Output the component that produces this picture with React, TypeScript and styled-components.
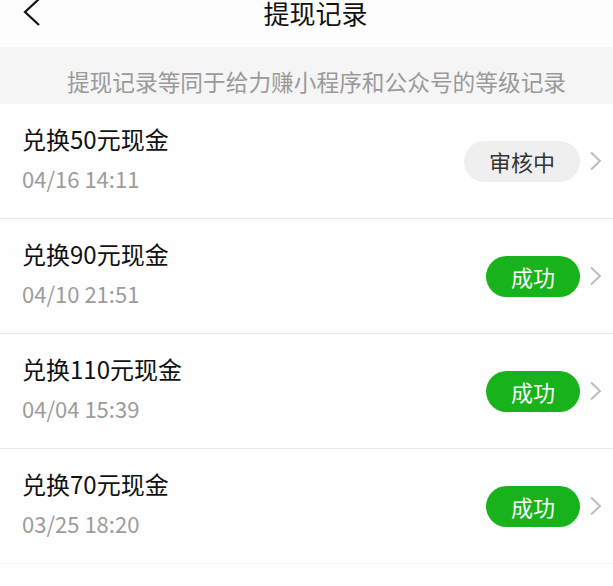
import React from "react";
import styled, { createGlobalStyle } from "styled-components";

const GlobalStyle = createGlobalStyle`
  html, body {
    margin: 0;
    padding: 0;
    background: #fefefe;
  }
  body {
    font-family: "Noto Sans CJK SC", "Noto Sans", sans-serif;
  }
`;

const Page = styled.div`
  width: 613px;
  height: 586px;
  overflow: hidden;
  background: #fefefe;
`;

const Header = styled.div`
  position: relative;
  height: 47px;
  display: flex;
  justify-content: center;
  align-items: flex-start;
  padding-left: 18px;
  background: #fdfdfd;
`;

const BackButton = styled.div`
  position: absolute;
  left: 22px;
  top: -2px;
  width: 20px;
  height: 28px;
  cursor: pointer;
`;

const Title = styled.h1`
  margin: -2px 0 0;
  font-size: 26px;
  line-height: 30px;
  font-weight: 400;
  color: #111;
`;

const Notice = styled.div`
  height: 57px;
  display: flex;
  align-items: center;
  justify-content: center;
  padding-left: 20px;
  padding-top: 12px;
  box-sizing: border-box;
  background: #f5f5f5;
  color: #9a9a9a;
  font-size: 22.7px;
`;

const List = styled.div`
  display: flex;
  flex-direction: column;
`;

const Row = styled.div`
  height: 114px;
  display: flex;
  align-items: center;
  justify-content: space-between;
  padding: 0 11px 0 22px;
  border-bottom: 1px solid #e8e8e8;

  &:last-child {
    border-bottom-color: #f5f5f5;
  }
`;

const Info = styled.div`
  display: flex;
  flex-direction: column;
  gap: 8px;
  margin-bottom: 6px;
`;

const RowTitle = styled.div`
  font-size: 24px;
  line-height: 32px;
  color: #111;
`;

const RowDate = styled.div`
  font-size: 22px;
  line-height: 30px;
  color: #9c9c9c;
`;

const Side = styled.div`
  display: flex;
  align-items: center;
  gap: 9px;
`;

const Badge = styled.span<{ $done: boolean }>`
  height: 41px;
  padding: 0 25px;
  border-radius: 21px;
  display: inline-flex;
  align-items: center;
  font-size: 22px;
  background: ${({ $done }) => ($done ? "#18b31a" : "#efefef")};
  color: ${({ $done }) => ($done ? "#fff" : "#333")};
`;

const Arrow = styled.svg`
  width: 13px;
  height: 20px;
  display: block;
`;

const records = [
  { title: "兑换50元现金", date: "04/16 14:11", done: false },
  { title: "兑换90元现金", date: "04/10 21:51", done: true },
  { title: "兑换110元现金", date: "04/04 15:39", done: true },
  { title: "兑换70元现金", date: "03/25 18:20", done: true },
];

export default function App() {
  return (
    <Page>
      <GlobalStyle />
      <Header>
        <BackButton>
          <svg width="20" height="28" viewBox="0 0 20 28">
            <polyline
              points="17,1 3,14 17,27"
              fill="none"
              stroke="#111"
              strokeWidth="2.2"
            />
          </svg>
        </BackButton>
        <Title>提现记录</Title>
      </Header>
      <Notice>提现记录等同于给力赚小程序和公众号的等级记录</Notice>
      <List>
        {records.map((r) => (
          <Row key={r.date}>
            <Info>
              <RowTitle>{r.title}</RowTitle>
              <RowDate>{r.date}</RowDate>
            </Info>
            <Side>
              <Badge $done={r.done}>{r.done ? "成功" : "审核中"}</Badge>
              <Arrow viewBox="0 0 13 20">
                <polyline
                  points="2,1.5 11,10 2,18.5"
                  fill="none"
                  stroke="#bdbdbd"
                  strokeWidth="2"
                />
              </Arrow>
            </Side>
          </Row>
        ))}
      </List>
    </Page>
  );
}
